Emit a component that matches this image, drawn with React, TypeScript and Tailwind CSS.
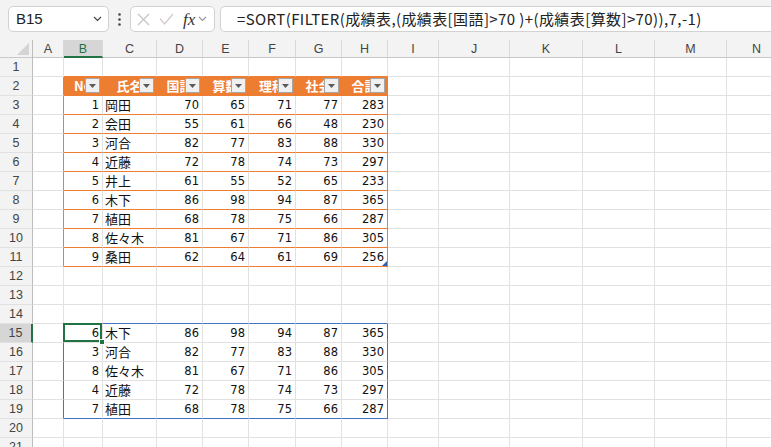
import React from 'react'

const COLS = [
  { c: 'A', w: 'w-[31px]' },
  { c: 'B', w: 'w-[39px]' },
  { c: 'C', w: 'w-[54px]' },
  { c: 'D', w: 'w-[46px]' },
  { c: 'E', w: 'w-[46px]' },
  { c: 'F', w: 'w-[47px]' },
  { c: 'G', w: 'w-[46px]' },
  { c: 'H', w: 'w-[46px]' },
  { c: 'I', w: 'w-[51px]' },
  { c: 'J', w: 'w-[71px]' },
  { c: 'K', w: 'w-[73px]' },
  { c: 'L', w: 'w-[72px]' },
  { c: 'M', w: 'w-[72px]' },
  { c: 'N', w: 'w-[60px]' },
]

const HEADERS = ['No', '氏名', '国語', '算数', '理科', '社会', '合計']

const TABLE1: (string | number)[][] = [
  [1, '岡田', 70, 65, 71, 77, 283],
  [2, '会田', 55, 61, 66, 48, 230],
  [3, '河合', 82, 77, 83, 88, 330],
  [4, '近藤', 72, 78, 74, 73, 297],
  [5, '井上', 61, 55, 52, 65, 233],
  [6, '木下', 86, 98, 94, 87, 365],
  [7, '植田', 68, 78, 75, 66, 287],
  [8, '佐々木', 81, 67, 71, 86, 305],
  [9, '桑田', 62, 64, 61, 69, 256],
]

const TABLE2: (string | number)[][] = [
  [6, '木下', 86, 98, 94, 87, 365],
  [3, '河合', 82, 77, 83, 88, 330],
  [8, '佐々木', 81, 67, 71, 86, 305],
  [4, '近藤', 72, 78, 74, 73, 297],
  [7, '植田', 68, 78, 75, 66, 287],
]

const ROWS = Array.from({ length: 21 }, (_, i) => i + 1)

const Chevron = ({ className = '' }: { className?: string }) => (
  <svg width="9" height="6" viewBox="0 0 9 6" className={className}>
    <path d="M1 1 L4.5 4.5 L8 1" fill="none" stroke="currentColor" strokeWidth="1.2" />
  </svg>
)

const FilterButton = () => (
  <div className="absolute right-[2px] top-[1px] w-[15px] h-[15px] bg-[#f0f0f0] border border-[#a6a6a6] flex items-center justify-center">
    <svg width="7" height="4" viewBox="0 0 7 4">
      <path d="M0 0 H7 L3.5 4 Z" fill="#5a5a5a" />
    </svg>
  </div>
)

function Cell({ r, ci }: { r: number; ci: number }) {
  const col = COLS[ci]
  const inCols = ci >= 1 && ci <= 7
  const inT1 = r >= 2 && r <= 11
  const inT2 = r >= 15 && r <= 19

  let br = 'border-r-[#e1e1e1]'
  if ((ci === 0 || ci === 7) && inT1) br = 'border-r-[#ed7d31]'
  if ((ci === 0 || ci === 7) && inT2) br = 'border-r-[#4472c4]'
  if (r === 2 && inCols) br = 'border-r-[#ed7d31]'

  // orange table: every row line orange; spill range: only the outline is blue
  let bb = 'border-b-[#e1e1e1]'
  if (inCols && r >= 1 && r <= 11) bb = 'border-b-[#ed7d31]'
  if (inCols && (r === 14 || r === 19)) bb = 'border-b-[#4472c4]'

  const base = `${col.w} shrink-0 h-full border-r border-b ${br} ${bb} relative`

  if (r === 2 && inCols) {
    return (
      <div className={`${base} bg-[#ed7d31] overflow-hidden`}>
        <div className="text-center text-white font-bold text-[13px] leading-[18px] whitespace-nowrap font-['Noto_Sans_CJK_JP',sans-serif]">
          {HEADERS[ci - 1]}
        </div>
        <FilterButton />
      </div>
    )
  }

  let value: string | number | undefined
  if (r >= 3 && r <= 11 && inCols) value = TABLE1[r - 3][ci - 1]
  if (inT2 && inCols) value = TABLE2[r - 15][ci - 1]

  const selected = r === 15 && ci === 1
  const corner = r === 11 && ci === 7

  return (
    <div className={`${base} ${selected ? 'z-10' : ''}`}>
      {value !== undefined &&
        (typeof value === 'number' ? (
          <div className="text-right pr-[3px] text-[11.5px] leading-[19px] text-[#111] font-['DejaVu_Sans',sans-serif]">
            {value}
          </div>
        ) : (
          <div className="pl-[2px] text-[13px] leading-[18px] text-[#111] whitespace-nowrap font-['Noto_Sans_CJK_JP',sans-serif]">
            {value}
          </div>
        ))}
      {selected && (
        <>
          <div className="absolute -left-px -top-px right-0 bottom-0 border-2 border-[#217346]" />
          <div className="absolute -right-[3px] -bottom-[3px] w-[6px] h-[6px] bg-[#217346] border border-white" />
        </>
      )}
      {corner && (
        <svg width="5" height="5" viewBox="0 0 5 5" className="absolute right-0 bottom-0">
          <path d="M5 0 V5 H0 Z" fill="#2f5fb3" />
        </svg>
      )}
    </div>
  )
}

export default function App() {
  return (
    <div className="w-[771px] h-[447px] overflow-hidden bg-white font-['Liberation_Sans',sans-serif]">
      {/* Formula bar */}
      <div className="h-[40px] bg-[#f3f3f3] flex items-start pt-[6px]">
        <div className="ml-[8px] w-[101px] h-[26px] bg-white border border-[#d2d2d2] rounded-[5px] flex items-center justify-between pl-[7px] pr-[6px]">
          <span className="text-[15px] text-[#222]">B15</span>
          <Chevron className="text-[#444]" />
        </div>
        <div className="w-[21px] h-[26px] flex items-center justify-center">
          <svg width="3" height="13" viewBox="0 0 3 13">
            <circle cx="1.5" cy="1.5" r="1.3" fill="#444" />
            <circle cx="1.5" cy="6.5" r="1.3" fill="#444" />
            <circle cx="1.5" cy="11.5" r="1.3" fill="#444" />
          </svg>
        </div>
        <div className="w-[85px] h-[26px] bg-white border border-[#d2d2d2] rounded-[5px] flex items-center pl-[6px]">
          <svg width="13" height="13" viewBox="0 0 13 13">
            <path d="M1 1 L12 12 M12 1 L1 12" stroke="#c4c4c4" strokeWidth="1.2" />
          </svg>
          <svg width="15" height="12" viewBox="0 0 15 12" className="ml-[9px]">
            <path d="M1 5.5 L5.5 11 L14 1" fill="none" stroke="#d6c6cf" strokeWidth="1.2" />
          </svg>
          <span className="ml-[9px] text-[17px] italic font-['Liberation_Serif',serif] text-[#333] leading-none">
            fx
          </span>
          <Chevron className="ml-[3px] text-[#999]" />
        </div>
        <div className="ml-[5px] flex-1 h-[26px] bg-white border border-r-0 border-[#d2d2d2] rounded-l-[5px] flex items-center pl-[16px]">
          <span className="text-[15px] tracking-[0.4px] text-[#222] whitespace-nowrap font-['Noto_Sans_CJK_JP',sans-serif]">
            =SORT(FILTER(成績表,(成績表[国語]&gt;70 )+(成績表[算数]&gt;70)),7,-1)
          </span>
        </div>
      </div>

      {/* Column headers */}
      <div className="flex h-[18px] bg-[#f3f3f3]">
        <div className="w-[33px] shrink-0 h-full border-r border-b border-r-[#bdbdbd] border-b-[#c8c8c8] relative">
          <svg width="12" height="12" viewBox="0 0 12 12" className="absolute right-[3px] bottom-[2px]">
            <path d="M12 0 V12 H0 Z" fill="#d4d4d4" />
          </svg>
        </div>
        {COLS.map((col, i) => (
          <div
            key={col.c}
            className={`${col.w} shrink-0 h-full border-r border-r-[#d8d8d8] text-center text-[12.5px] leading-[18px] ${
              i === 1
                ? 'bg-[#d6d6d6] text-[#217346] border-b-2 border-b-[#217346]'
                : 'text-[#444] border-b border-b-[#c8c8c8]'
            }`}
          >
            {col.c}
          </div>
        ))}
      </div>

      {/* Rows */}
      {ROWS.map((r) => (
        <div key={r} className="flex h-[19px]">
          <div
            className={`w-[33px] shrink-0 h-full border-b border-b-[#e1e1e1] text-center text-[12.5px] leading-[18px] text-[#444] ${
              r === 15
                ? 'bg-[#d6d6d6] border-r-2 border-r-[#217346]'
                : 'bg-[#f3f3f3] border-r border-r-[#bdbdbd]'
            }`}
          >
            {r}
          </div>
          {COLS.map((_, ci) => (
            <Cell key={ci} r={r} ci={ci} />
          ))}
        </div>
      ))}
    </div>
  )
}
